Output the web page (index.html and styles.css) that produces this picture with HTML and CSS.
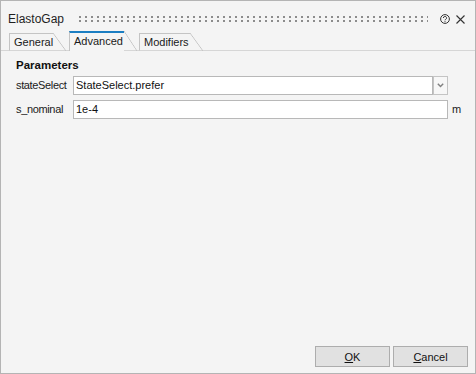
FILE: index.html
```html
<!DOCTYPE html>
<html lang="en">
<head>
    <meta charset="UTF-8">
    <title>ElastoGap</title>
    <link rel="stylesheet" href="styles.css">
</head>
<body>
    <div class="window">
        <div class="titlebar">
            <span class="title">ElastoGap</span>
            <div class="grip"></div>
            <svg class="help" width="10" height="10" viewBox="0 0 10 10">
                <circle cx="5" cy="5" r="4.4" fill="none" stroke="#333" stroke-width="1"/>
                <path d="M3.4 4 a1.6 1.5 0 1 1 2.3 1.3 c-0.5 0.3 -0.7 0.5 -0.7 1" fill="none" stroke="#333" stroke-width="1"/>
                <rect x="4.5" y="7.2" width="1" height="1" fill="#333"/>
            </svg>
            <svg class="close" width="9" height="9" viewBox="0 0 9 9">
                <path d="M0.5 0.5 L8.5 8.5 M8.5 0.5 L0.5 8.5" stroke="#333" stroke-width="1.1"/>
            </svg>
        </div>

        <div class="tabstrip">
            <div class="tab tab-general">General</div>
            <div class="tab tab-advanced selected">Advanced</div>
            <div class="tab tab-modifiers">Modifiers</div>
        </div>

        <div class="content">
            <div class="group-title">Parameters</div>
            <div class="form">
                <label class="label">stateSelect</label>
                <div class="combo">
                    <div class="combo-field">StateSelect.prefer</div>
                    <div class="combo-button">
                        <svg width="7" height="5" viewBox="0 0 7 5">
                            <path d="M0.8 0.8 L3.5 3.6 L6.2 0.8" fill="none" stroke="#808080" stroke-width="1.4"/>
                        </svg>
                    </div>
                </div>
                <span class="unit"></span>

                <label class="label">s_nominal</label>
                <div class="field">1e-4</div>
                <span class="unit">m</span>
            </div>
        </div>

        <div class="footer">
            <button class="btn"><u>O</u>K</button>
            <button class="btn"><u>C</u>ancel</button>
        </div>
    </div>
</body>
</html>
```

FILE: styles.css
```css
body {
    margin: 0;
    font-family: "Liberation Sans", Arial, sans-serif;
    font-size: 11px;
    color: #1a1a1a;
}

.window {
    width: 476px;
    height: 374px;
    box-sizing: border-box;
    border: 1px solid #b4b4b4;
    background: #f4f4f4;
    display: flex;
    flex-direction: column;
}

.titlebar {
    height: 30px;
    box-sizing: border-box;
    padding: 6px 10px 0 7px;
    display: flex;
    align-items: center;
}

.title {
    font-size: 12px;
    line-height: 14px;
    color: #1f1f1f;
}

.grip {
    flex: 1;
    height: 6px;
    margin: 0 12px 0 15px;
    background-image:
        linear-gradient(to right, #8c8c8c 2px, transparent 2px),
        linear-gradient(to right, #8c8c8c 2px, transparent 2px);
    background-size: 6px 2px;
    background-position: 0 0, 0 4px;
    background-repeat: repeat-x;
}

.help {
    margin-right: 6px;
}

.tabstrip {
    height: 20px;
    box-sizing: border-box;
    padding-left: 8px;
    border-bottom: 1px solid #d6d6d6;
    display: flex;
    align-items: flex-end;
}

.tab {
    position: relative;
    height: 18px;
    box-sizing: border-box;
    border-left: 1px solid #c4c4c4;
    border-top: 1px solid #c4c4c4;
    border-bottom: 1px solid #d6d6d6;
    padding-left: 4px;
    line-height: 16px;
    margin-right: 16px;
    margin-bottom: -1px;
}

.tab::after {
    content: "";
    position: absolute;
    left: 100%;
    top: -1px;
    bottom: -1px;
    width: 13px;
    background: linear-gradient(to top right, transparent calc(50% - 0.7px), #c4c4c4 50%, transparent calc(50% + 0.7px));
}

.tab-general {
    width: 44px;
}

.tab-advanced {
    width: 55px;
    margin-right: 15px;
}

.tab-modifiers {
    width: 51px;
}

.tab.selected {
    height: 20px;
    border-top: 2px solid #1b7ec2;
    border-bottom: none;
    background: #f4f4f4;
    line-height: 17px;
}

.tab.selected::after {
    top: -2px;
    bottom: 0;
}

.content {
    flex: 1;
    padding: 7px 13px 0 15px;
}

.group-title {
    font-weight: bold;
    font-size: 11.5px;
    line-height: 14px;
    color: #111;
}

.form {
    margin-top: 4px;
    display: grid;
    grid-template-columns: 53px 1fr 10px;
    column-gap: 4px;
    row-gap: 5px;
    align-items: center;
}

.label {
    line-height: 19px;
    white-space: nowrap;
    letter-spacing: -0.35px;
}

.combo {
    display: flex;
    height: 19px;
}

.combo-field,
.field {
    height: 19px;
    box-sizing: border-box;
    background: #fff;
    border: 1px solid #b8b8b8;
    padding-left: 2px;
    line-height: 17px;
    color: #111;
}

.combo-field {
    flex: 1;
}

.combo-button {
    width: 15px;
    height: 19px;
    box-sizing: border-box;
    border: 1px solid #c4c4c4;
    background: #f7f7f7;
    display: flex;
    align-items: center;
    justify-content: center;
}

.unit {
    line-height: 19px;
}

.footer {
    display: flex;
    justify-content: flex-end;
    gap: 3px;
    padding: 0 7px 6px 0;
}

.btn {
    width: 75px;
    height: 21px;
    box-sizing: border-box;
    border: 1px solid #adadad;
    background: #e1e1e1;
    font-family: "Liberation Sans", Arial, sans-serif;
    font-size: 11px;
    color: #111;
    padding: 0;
}
```
